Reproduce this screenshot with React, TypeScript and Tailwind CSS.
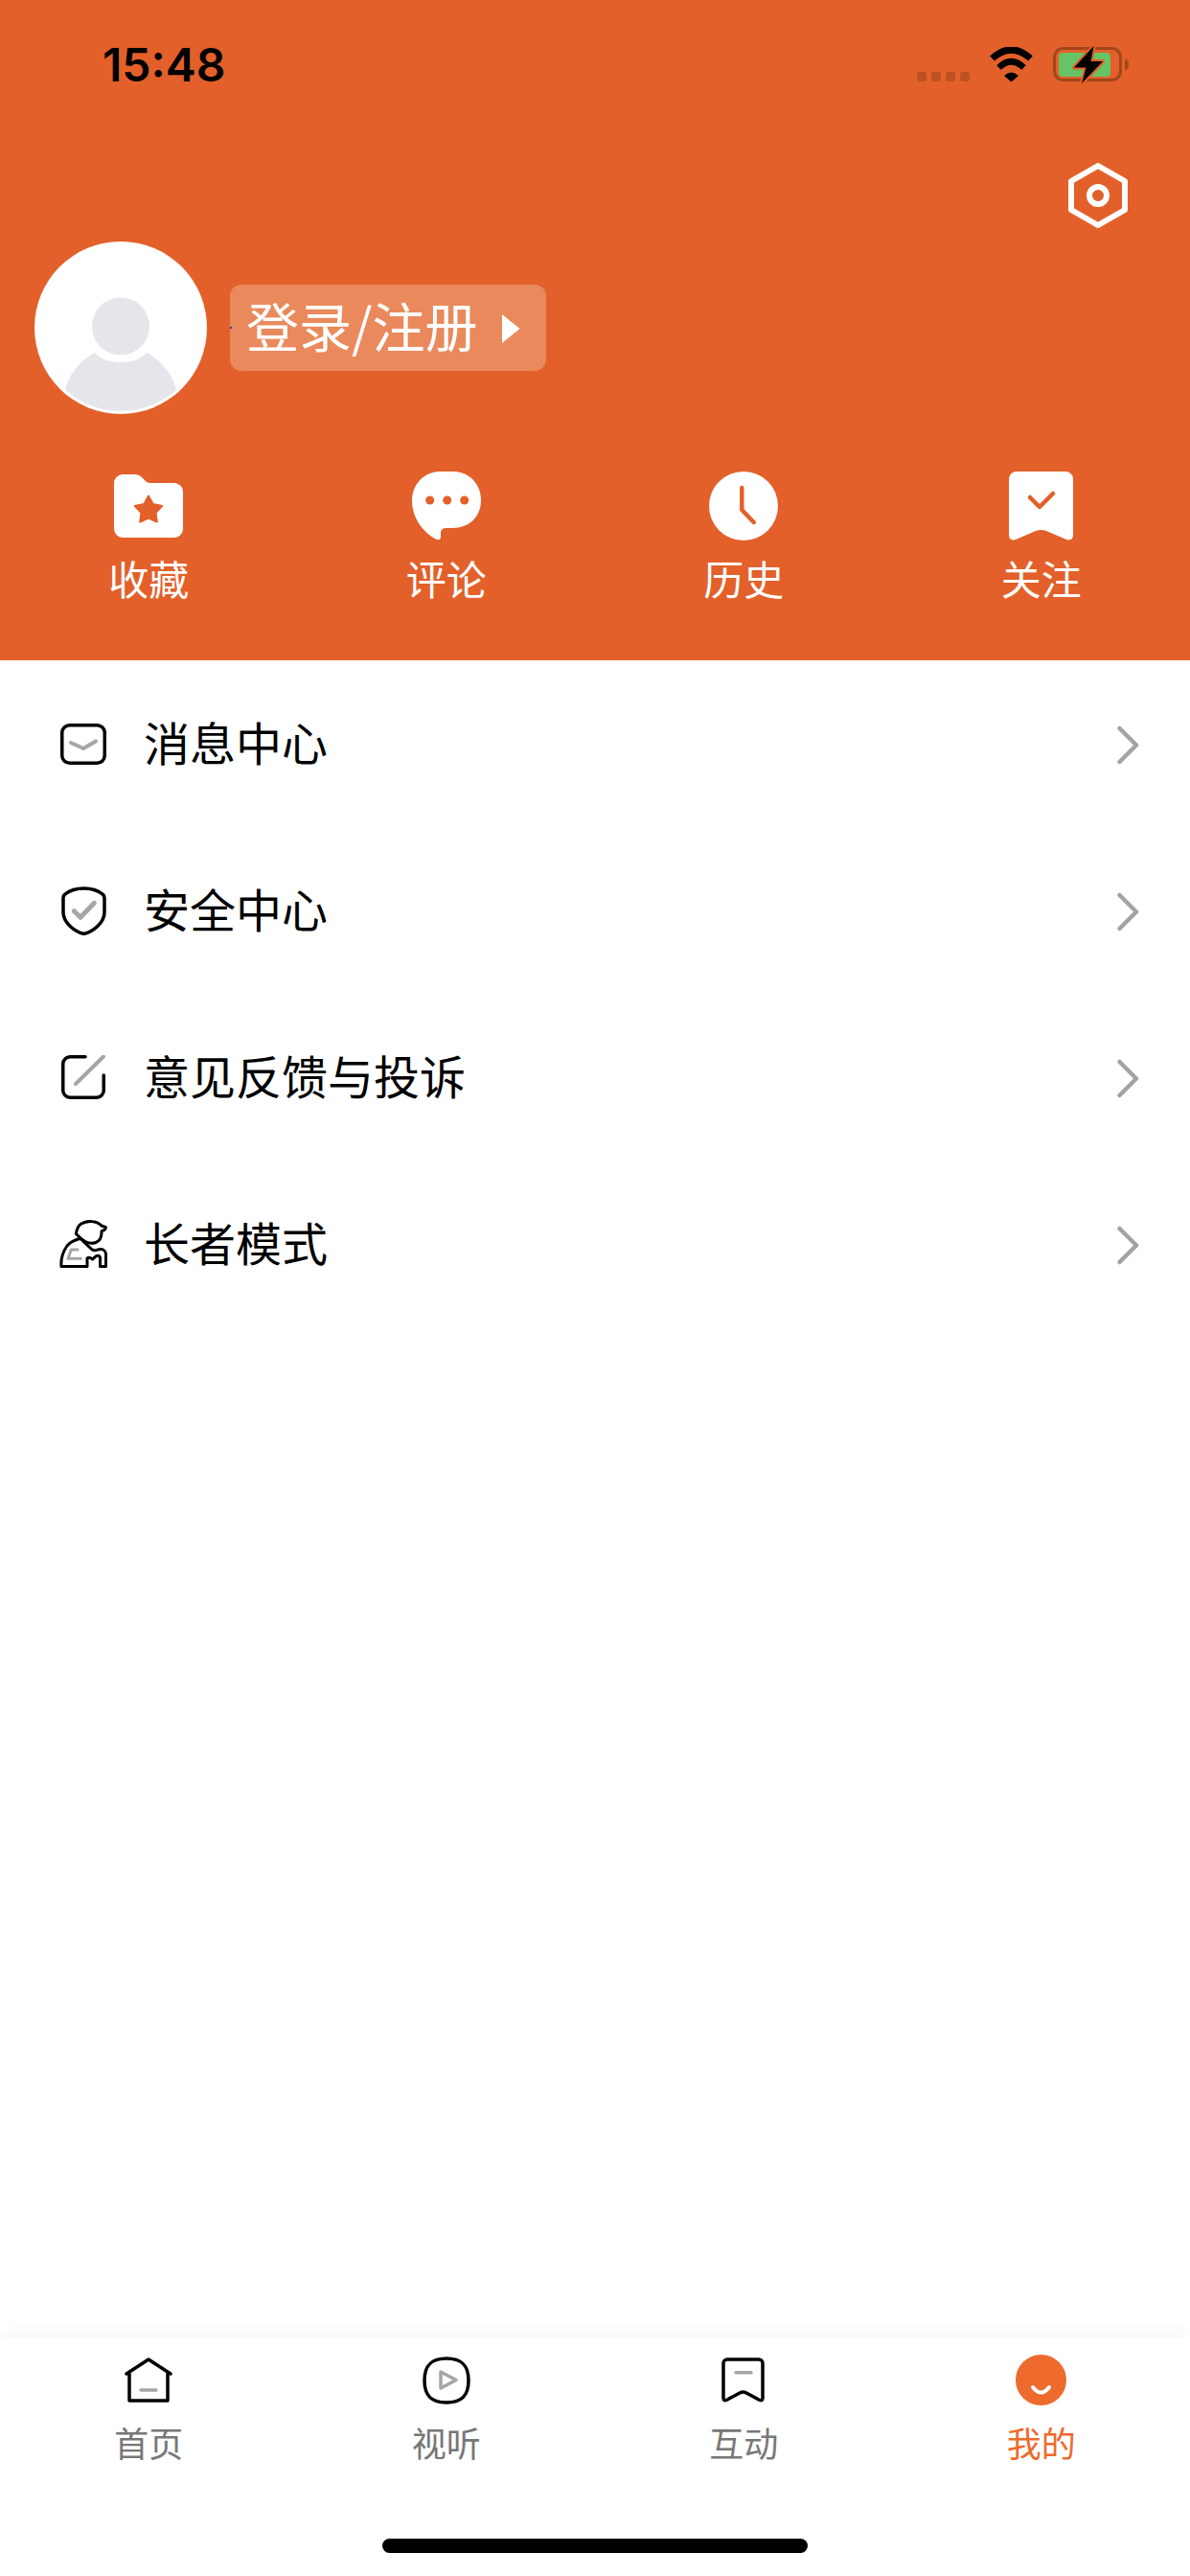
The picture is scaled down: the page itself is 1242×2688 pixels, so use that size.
const GRAY = "#a6a6a6";

function Wifi() {
  return (
    <svg width="47" height="37" viewBox="0 0 47 37" fill="none" stroke="#000">
      <path d="M3.5 12 Q23.5 -6 43.5 12" strokeWidth="7" />
      <path d="M10.5 21.5 Q23.5 9 36.5 21.5" strokeWidth="6.500" />
      <path d="M16 30 Q23.5 23 31 30 L23.5 36.5Z" fill="#000" stroke="none" />
    </svg>
  );
}

function Battery() {
  return (
    <svg width="79" height="38" viewBox="0 0 79 38" fill="none" className="overflow-visible">
      <rect x="1.5" y="1.5" width="69" height="33" rx="9" stroke="#a2461b" strokeWidth="3" />
      <rect x="6" y="6" width="54" height="25" rx="4" fill="#65c466" />
      <path d="M75 12 Q79 14 79 18.5 Q79 23 75 25Z" fill="#a2461b" />
      <path
        d="M42.5 -1 L22 21.5 H34.5 L30 38 L52 15 H39.5Z"
        fill="#000"
        stroke="#e3602a"
        strokeWidth="4"
        strokeLinejoin="round"
        paintOrder="stroke"
      />
    </svg>
  );
}

function Settings() {
  return (
    <svg width="62" height="68" viewBox="0 0 62 68" fill="none" stroke="#fff" strokeWidth="6" strokeLinejoin="round">
      <path d="M31 3 L59 19 V49 L31 65 L3 49 V19Z" />
      <circle cx="31" cy="34" r="9" />
    </svg>
  );
}

function Avatar() {
  return (
    <svg width="180" height="180" viewBox="0 0 180 180" className="shrink-0">
      <circle cx="90" cy="90" r="90" fill="#fff" />
      <circle cx="90" cy="88.5" r="30" fill="#e4e6eb" />
      <path
        d="M32 155 C36 138 48 124 63 116 C70 124 80 126 90 126 C100 126 110 124 117 116 C132 124 144 138 148 155 A88 88 0 0 1 32 155Z"
        fill="#e4e6eb"
      />
    </svg>
  );
}

function FolderStar() {
  return (
    <svg width="72" height="66" viewBox="0 0 72 66" className="mt-[3px]">
      <path
        d="M9 0 H22 Q26 0 29 3 L32 6 Q34 9 38 9 H63 a9 9 0 0 1 9 9 V57 a9 9 0 0 1 -9 9 H9 a9 9 0 0 1 -9 -9 V9 a9 9 0 0 1 9 -9Z"
        fill="#fff"
      />
      <path
        d="M36 22.5 L40.700 31 L50.300 32.900 L43.600 40 L44.800 49.600 L36 45.500 L27.200 49.600 L28.400 40 L21.700 32.900 L31.300 31Z"
        fill="#e3602a"
        stroke="#e3602a"
        strokeWidth="2"
        strokeLinejoin="round"
      />
    </svg>
  );
}

function ChatDots() {
  return (
    <svg width="72" height="72" viewBox="0 0 72 72">
      <path
        d="M30 0 H42 C60 0 72 13 72 30 C72 47 60 59 42 59 H36 Q30 59 30 64 V69 Q29 72 26 71 C10 63 0 47 0 30 C0 13 13 0 30 0Z"
        fill="#fff"
      />
      <circle cx="18.7" cy="30" r="4.5" fill="#e3602a" />
      <circle cx="36.7" cy="30" r="4.5" fill="#e3602a" />
      <circle cx="54.7" cy="30" r="4.5" fill="#e3602a" />
    </svg>
  );
}

function ClockFilled() {
  return (
    <svg width="72" height="72" viewBox="0 0 72 72" fill="none">
      <circle cx="36" cy="36" r="36" fill="#fff" />
      <path d="M34.3 17 V40 L46.7 53" stroke="#e3602a" strokeWidth="4.5" strokeLinecap="round" strokeLinejoin="round" />
    </svg>
  );
}

function BookmarkCheck() {
  return (
    <svg width="67" height="72" viewBox="0 0 67 72" fill="none">
      <path
        d="M8 0 H59 a8 8 0 0 1 8 8 V66 Q67 73 60 71 L39 62 Q33.5 60 28 62 L7 71 Q0 73 0 66 V8 a8 8 0 0 1 8 -8Z"
        fill="#fff"
      />
      <path d="M22 27 L32 37 L46 23" stroke="#e3602a" strokeWidth="4.500" strokeLinecap="round" strokeLinejoin="round" />
    </svg>
  );
}

function MessageIcon() {
  return (
    <svg width="48" height="43" viewBox="0 0 48 43" fill="none">
      <rect x="1.75" y="1.75" width="44.5" height="39.5" rx="8" stroke="#000" strokeWidth="3.500" />
      <path d="M11 20 L24 26 L37 18.500" stroke={GRAY} strokeWidth="4" strokeLinecap="round" strokeLinejoin="round" />
    </svg>
  );
}

function ShieldIcon() {
  return (
    <svg width="47" height="51" viewBox="0 0 47 51" fill="none">
      <path
        d="M23.500 2 C31 2 38 4 43 8 Q45 9.500 45 12 V27 C45 38 33 47 23.500 49.500 C14 47 2 38 2 27 V12 Q2 9.500 4 8 C9 4 16 2 23.500 2Z"
        stroke="#000"
        strokeWidth="3.500"
        strokeLinejoin="round"
      />
      <path d="M13.300 25.700 L20 32.300 L34.300 17.300" stroke={GRAY} strokeWidth="5" strokeLinecap="round" strokeLinejoin="round" />
    </svg>
  );
}

function EditIcon() {
  return (
    <svg width="46" height="46" viewBox="0 0 46 46" fill="none">
      <path
        d="M25 1.750 H9 a7.500 7.500 0 0 0 -7.250 7.250 V37 a7.500 7.500 0 0 0 7.250 7.250 H37 a7.500 7.500 0 0 0 7.250 -7.250 V21"
        stroke="#000"
        strokeWidth="3.500"
        strokeLinecap="round"
      />
      <path d="M15 30 L44 1.500" stroke={GRAY} strokeWidth="4" strokeLinecap="round" />
    </svg>
  );
}

function ElderIcon() {
  return (
    <svg width="50" height="50" viewBox="0 0 50 50" fill="none" stroke="#000" strokeWidth="3" strokeLinejoin="round" strokeLinecap="round">
      <path d="M17.300 14.300 Q19 6 22.300 4.300 Q28 0.800 34 1.500 Q40 2 44 6 L48.500 7.700 Q48 10.500 44 11.700 Q44.500 21 38 23.500 Q32.300 25.500 27 22.500 Q22 20 17.300 14.300Z" />
      <path d="M2 48.500 Q1 37 8 27 Q12 22 22 19.300 L33 30 Q36 33 40 31 Q47 29 48.500 35 V48.500 H42.500 V39 Q41 36 38 38 L34.500 41 Q31 38 29 40 V48.500Z" />
      <path d="M19 31 H12.300 L9 40.300 H22.300" stroke={GRAY} strokeWidth="3" />
    </svg>
  );
}

function HomeIcon() {
  return (
    <svg width="50" height="47" viewBox="0 0 50 47" fill="none" stroke="#000" strokeWidth="3.500" strokeLinejoin="round" strokeLinecap="round">
      <path d="M2 17 L25 2 L48 17" />
      <path d="M5 17 V45 H45 V17" />
      <path d="M17 34 H33" stroke={GRAY} />
    </svg>
  );
}

function PlayIcon() {
  return (
    <svg width="50" height="50" viewBox="0 0 50 50" fill="none" stroke="#000" strokeWidth="3.500" strokeLinejoin="round">
      <path d="M25 2 C41 2 48 9 48 25 C48 41 41 48 25 48 C9 48 2 41 2 25 C2 9 9 2 25 2Z" />
      <path d="M19 16 L35 24.500 L19 33Z" stroke={GRAY} />
    </svg>
  );
}

function BookmarkIcon() {
  return (
    <svg width="46" height="47" viewBox="0 0 46 47" fill="none" stroke="#000" strokeWidth="3.500" strokeLinejoin="round" strokeLinecap="round">
      <path d="M6 2 H39 a4 4 0 0 1 4 4 V42 Q43 46 39 44 L26 37 Q22.500 35 19 37 L6 44 Q2 46 2 42 V6 a4 4 0 0 1 4 -4Z" />
      <path d="M15 15.700 H31" stroke={GRAY} />
    </svg>
  );
}

function SmileIcon() {
  return (
    <svg width="53" height="53" viewBox="0 0 53 53" fill="none">
      <circle cx="26.500" cy="26.500" r="26.500" fill="#ee6a2d" />
      <path d="M18 34 Q26.500 45 35 34" stroke="#fff" strokeWidth="4" strokeLinecap="round" />
    </svg>
  );
}

const SHORTCUTS = [
  { label: "收藏", icon: <FolderStar /> },
  { label: "评论", icon: <ChatDots /> },
  { label: "历史", icon: <ClockFilled /> },
  { label: "关注", icon: <BookmarkCheck /> },
];

const MENU = [
  { label: "消息中心", icon: <MessageIcon /> },
  { label: "安全中心", icon: <ShieldIcon /> },
  { label: "意见反馈与投诉", icon: <EditIcon /> },
  { label: "长者模式", icon: <ElderIcon /> },
];

const TABS = [
  { label: "首页", icon: <HomeIcon />, active: false },
  { label: "视听", icon: <PlayIcon />, active: false },
  { label: "互动", icon: <BookmarkIcon />, active: false },
  { label: "我的", icon: <SmileIcon />, active: true },
];

export default function App() {
  return (
    <div className="flex h-[2688px] w-[1242px] flex-col overflow-hidden bg-white font-['Noto_Sans_CJK_SC','Noto_Sans_CJK_JP',sans-serif]">
      <header className="h-[689px] shrink-0 bg-[#e3602a]">
        <div className="flex h-[170px] items-start justify-between pl-[107px] pr-[64px]">
          <span className="mt-[40px] font-['Inter',sans-serif] text-[48px] leading-[56px] font-semibold text-black">
            15:48
          </span>
          <div className="mt-[49px] flex items-start">
            <div className="mt-[26px] flex gap-[5px]">
              <span className="size-[10px] rounded-[3px] bg-[#ba5222]" />
              <span className="size-[10px] rounded-[3px] bg-[#ba5222]" />
              <span className="size-[10px] rounded-[3px] bg-[#ba5222]" />
              <span className="size-[10px] rounded-[3px] bg-[#ba5222]" />
            </div>
            <div className="ml-[20px]">
              <Wifi />
            </div>
            <div className="ml-[20px]">
              <Battery />
            </div>
          </div>
        </div>

        <div className="flex h-[82px] items-start justify-end pr-[65px]">
          <Settings />
        </div>

        <div className="flex h-[180px] items-center pl-[36px]">
          <Avatar />
          <button className="relative ml-[24px] flex h-[90px] w-[330px] items-center rounded-[12px] bg-[#ea8a5c] pb-[9px] pl-[17px] text-[55px] leading-[80px] text-white">
            <span className="absolute top-[44px] left-0 size-[2px] bg-[#1d3bd8]" />
            登录/注册
            <svg width="19" height="30" viewBox="0 0 19 30" className="absolute top-[31px] left-[284px]">
              <path d="M0 0 L18.500 15 L0 30Z" fill="#fff" />
            </svg>
          </button>
        </div>

        <div className="mt-[60px] grid grid-cols-4">
          {SHORTCUTS.map((s) => (
            <div key={s.label} className="flex flex-col items-center">
              <div className="flex h-[72px] items-start">{s.icon}</div>
              <span className="mt-[17px] text-[42px] leading-[44px] text-white">{s.label}</span>
            </div>
          ))}
        </div>
      </header>

      <main className="flex-1">
        {MENU.map((m) => (
          <div key={m.label} className="flex h-[174px] items-center pr-[53px] pl-[62px]">
            <div className="flex w-[50px] justify-center">{m.icon}</div>
            <span className="mb-[7px] ml-[38px] flex-1 text-[48px] leading-[56px] text-black">{m.label}</span>
            <svg width="24" height="44" viewBox="0 0 24 44" fill="none">
              <path d="M3.500 6 L21 23.500 L3.500 41" stroke="#a3a3a3" strokeWidth="4.500" strokeLinecap="round" strokeLinejoin="round" />
            </svg>
          </div>
        ))}
      </main>

      <nav className="h-[249px] shrink-0 bg-white pt-[18px] shadow-[0_-6px_16px_rgba(0,0,0,0.035)]">
        <div className="grid grid-cols-4">
          {TABS.map((t) => (
            <div key={t.label} className="flex flex-col items-center">
              <div className="flex h-[53px] items-center">{t.icon}</div>
              <span className={`mt-[18px] text-[36px] leading-[40px] ${t.active ? "text-[#ee6a2d]" : "text-[#777]"}`}>
                {t.label}
              </span>
            </div>
          ))}
        </div>
        <div className="mx-auto mt-[81px] h-[15px] w-[444px] rounded-full bg-black" />
      </nav>
    </div>
  );
}
